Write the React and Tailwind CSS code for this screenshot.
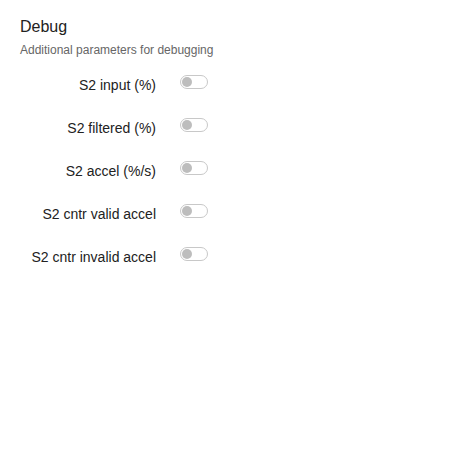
const ROWS = [
  'S2 input (%)',
  'S2 filtered (%)',
  'S2 accel (%/s)',
  'S2 cntr valid accel',
  'S2 cntr invalid accel',
]

function Toggle() {
  return (
    <span className="flex items-center w-[28px] h-[14px] rounded-full border border-[#c8c8c8] bg-white px-[1px]">
      <span className="w-[10px] h-[10px] rounded-full bg-[#bdbdbd]" />
    </span>
  )
}

export default function App() {
  return (
    <div className="w-[475px] h-[475px] bg-white pt-[17px] pl-[20px] font-['Liberation_Sans',Arial,sans-serif]">
      <div className="text-[16px] leading-[20px] text-[#222]">Debug</div>
      <div className="mt-[6px] text-[12px] leading-[14px] text-[#666]">Additional parameters for debugging</div>
      <div className="mt-[18px] flex flex-col gap-[25px]">
        {ROWS.map((label) => (
          <div key={label} className="flex items-start">
            <span className="w-[136px] text-right text-[14px] leading-[16px] text-[#222] pt-[2px]">{label}</span>
            <span className="ml-[24px]">
              <Toggle />
            </span>
          </div>
        ))}
      </div>
    </div>
  )
}
